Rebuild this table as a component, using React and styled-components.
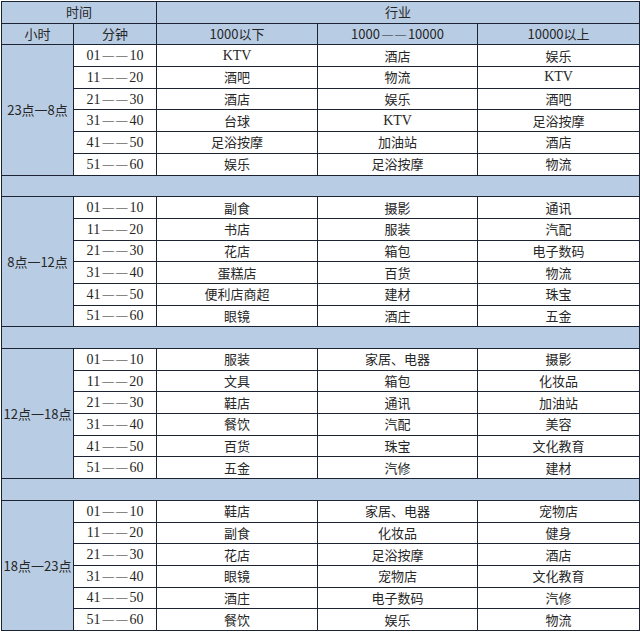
import React from "react";
import styled, { createGlobalStyle } from "styled-components";

const GlobalStyle = createGlobalStyle`
  html, body {
    margin: 0;
    padding: 0;
    background: #ffffff;
  }
`;

const Page = styled.div`
  padding: 1px 0 0 1px;
  width: 640px;
  box-sizing: border-box;
`;

const Table = styled.table`
  border-collapse: collapse;
  table-layout: fixed;
  width: 638px;
  font-family: "Noto Sans CJK SC", "Liberation Sans", sans-serif;
  font-size: 13px;
  color: #262626;
`;

const Row = styled.tr`
  height: 21.7px;
`;

const HeadCell = styled.th`
  border: 1px solid #1c2433;
  background: #b8cce4;
  font-weight: normal;
  font-size: 13px;
  padding: 0;
  line-height: 18px;
  text-align: center;
`;

const HourCell = styled.td`
  border: 1px solid #1c2433;
  background: #b8cce4;
  padding: 0;
  text-align: center;
  white-space: nowrap;
  font-size: 13px;
`;

const MinuteCell = styled.td`
  border: 1px solid #1c2433;
  padding: 0;
  text-align: center;
  font-family: "Liberation Serif", "Noto Sans CJK SC", serif;
  font-size: 14px;
  line-height: 18px;
  white-space: nowrap;
`;

const Dash = styled.span`
  display: inline-block;
  font-family: "Liberation Serif", serif;
  font-size: ${(p) => (p.small ? "11px" : "11.5px")};
  letter-spacing: 2px;
  margin: 0 0 0 2px;
  vertical-align: 1px;
`;

const Cell = styled.td`
  border: 1px solid #1c2433;
  padding: 0;
  text-align: center;
  line-height: 18px;
  font-family: ${(p) => (p.latin ? '"Liberation Serif", serif' : "inherit")};
  font-size: ${(p) => (p.latin ? "14px" : "13px")};
`;

const GapCell = styled.td`
  border: 1px solid #1c2433;
  background: #b8cce4;
  padding: 0;
`;

const minutes = [
  ["01", "10"],
  ["11", "20"],
  ["21", "30"],
  ["31", "40"],
  ["41", "50"],
  ["51", "60"],
];

const groups = [
  {
    hour: "23点一8点",
    rows: [
      ["KTV", "酒店", "娱乐"],
      ["酒吧", "物流", "KTV"],
      ["酒店", "娱乐", "酒吧"],
      ["台球", "KTV", "足浴按摩"],
      ["足浴按摩", "加油站", "酒店"],
      ["娱乐", "足浴按摩", "物流"],
    ],
  },
  {
    hour: "8点一12点",
    rows: [
      ["副食", "摄影", "通讯"],
      ["书店", "服装", "汽配"],
      ["花店", "箱包", "电子数码"],
      ["蛋糕店", "百货", "物流"],
      ["便利店商超", "建材", "珠宝"],
      ["眼镜", "酒庄", "五金"],
    ],
  },
  {
    hour: "12点一18点",
    rows: [
      ["服装", "家居、电器", "摄影"],
      ["文具", "箱包", "化妆品"],
      ["鞋店", "通讯", "加油站"],
      ["餐饮", "汽配", "美容"],
      ["百货", "珠宝", "文化教育"],
      ["五金", "汽修", "建材"],
    ],
  },
  {
    hour: "18点一23点",
    rows: [
      ["鞋店", "家居、电器", "宠物店"],
      ["副食", "化妆品", "健身"],
      ["花店", "足浴按摩", "酒店"],
      ["眼镜", "宠物店", "文化教育"],
      ["酒庄", "电子数码", "汽修"],
      ["餐饮", "娱乐", "物流"],
    ],
  },
];

const isLatin = (text) => /^[A-Za-z]+$/.test(text);

const App = () => {
  return (
    <Page>
      <GlobalStyle />
      <Table>
        <colgroup>
          <col style={{ width: 72 }} />
          <col style={{ width: 83 }} />
          <col style={{ width: 161 }} />
          <col style={{ width: 160 }} />
          <col style={{ width: 162 }} />
        </colgroup>
        <thead>
          <Row>
            <HeadCell colSpan={2}>时间</HeadCell>
            <HeadCell colSpan={3}>行业</HeadCell>
          </Row>
          <Row>
            <HeadCell>小时</HeadCell>
            <HeadCell>分钟</HeadCell>
            <HeadCell>1000以下</HeadCell>
            <HeadCell>
              1000<Dash small>——</Dash>10000
            </HeadCell>
            <HeadCell>10000以上</HeadCell>
          </Row>
        </thead>
        <tbody>
          {groups.map((group, gi) => (
            <React.Fragment key={group.hour}>
              {gi > 0 && (
                <Row>
                  <GapCell colSpan={5} />
                </Row>
              )}
              {group.rows.map((row, ri) => (
                <Row key={ri}>
                  {ri === 0 && <HourCell rowSpan={6}>{group.hour}</HourCell>}
                  <MinuteCell>
                    {minutes[ri][0]}
                    <Dash>——</Dash>
                    {minutes[ri][1]}
                  </MinuteCell>
                  {row.map((text, ci) => (
                    <Cell key={ci} latin={isLatin(text)}>
                      {text}
                    </Cell>
                  ))}
                </Row>
              ))}
            </React.Fragment>
          ))}
        </tbody>
      </Table>
    </Page>
  );
};

export default App;
